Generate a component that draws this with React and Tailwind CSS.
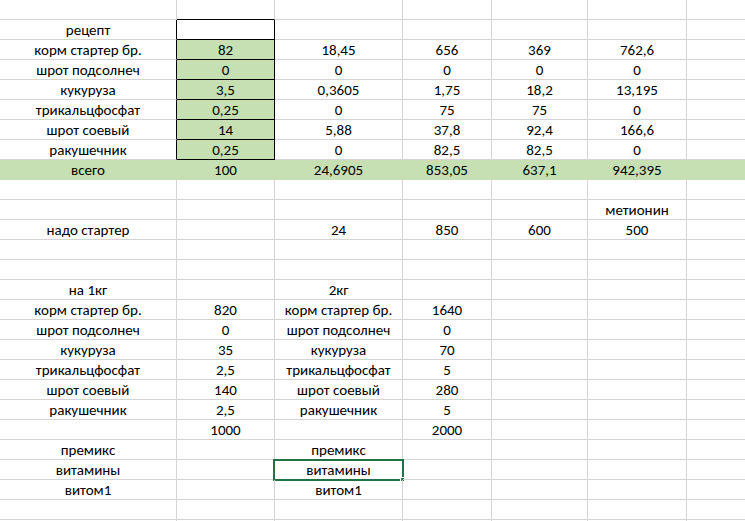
import React from "react";

const rows = [
  ["", "", "", "", "", "", ""],
  ["рецепт", "", "", "", "", "", ""],
  ["корм стартер бр.", "82", "18,45", "656", "369", "762,6", ""],
  ["шрот подсолнеч", "0", "0", "0", "0", "0", ""],
  ["кукуруза", "3,5", "0,3605", "1,75", "18,2", "13,195", ""],
  ["трикальцфосфат", "0,25", "0", "75", "75", "0", ""],
  ["шрот соевый", "14", "5,88", "37,8", "92,4", "166,6", ""],
  ["ракушечник", "0,25", "0", "82,5", "82,5", "0", ""],
  ["всего", "100", "24,6905", "853,05", "637,1", "942,395", ""],
  ["", "", "", "", "", "", ""],
  ["", "", "", "", "", "метионин", ""],
  ["надо стартер", "", "24", "850", "600", "500", ""],
  ["", "", "", "", "", "", ""],
  ["", "", "", "", "", "", ""],
  ["на 1кг", "", "2кг", "", "", "", ""],
  ["корм стартер бр.", "820", "корм стартер бр.", "1640", "", "", ""],
  ["шрот подсолнеч", "0", "шрот подсолнеч", "0", "", "", ""],
  ["кукуруза", "35", "кукуруза", "70", "", "", ""],
  ["трикальцфосфат", "2,5", "трикальцфосфат", "5", "", "", ""],
  ["шрот соевый", "140", "шрот соевый", "280", "", "", ""],
  ["ракушечник", "2,5", "ракушечник", "5", "", "", ""],
  ["", "1000", "", "2000", "", "", ""],
  ["премикс", "", "премикс", "", "", "", ""],
  ["витамины", "", "витамины", "", "", "", ""],
  ["витом1", "", "витом1", "", "", "", ""],
  ["", "", "", "", "", "", ""],
  ["", "", "", "", "", "", ""],
];

function cellClass(r, c) {
  let cls =
    "relative h-[20px] border-r border-b flex items-end justify-center pb-[1px] leading-none whitespace-nowrap ";
  if (r === 8) {
    return cls + "bg-[#c6e0b4] border-[#c6e0b4]";
  }
  let br = "border-r-[#d4d4d4]";
  let bb = "border-b-[#d4d4d4]";
  let bg = "";
  if (c === 1 && r >= 1 && r <= 7) {
    br = "border-r-black";
    bb = "border-b-black";
    if (r >= 2) bg = "bg-[#c6e0b4]";
  }
  if (c === 1 && r === 0) bb = "border-b-black";
  if (c === 0 && r >= 1 && r <= 7) br = "border-r-black";
  return cls + br + " " + bb + " " + bg;
}

export default function App() {
  return (
    <div
      className="w-[745px] h-[521px] overflow-hidden bg-white text-black text-[15px]"
      style={{ fontFamily: "Carlito, Lato, 'Liberation Sans', sans-serif" }}
    >
      <div className="grid grid-cols-[177px_98px_128px_89px_96px_99px_80px] w-[767px]">
        {rows.map((row, r) =>
          row.map((v, c) => (
            <div key={r + "-" + c} className={cellClass(r, c)}>
              <span>{v}</span>
              {r === 23 && c === 2 && (
                <div className="absolute left-[-2px] top-[-1px] right-[-2px] bottom-[-2px] border-2 border-[#217346] pointer-events-none">
                  <div className="absolute right-[-3px] bottom-[-3px] w-[5px] h-[5px] bg-[#217346] border border-white" />
                </div>
              )}
            </div>
          ))
        )}
      </div>
    </div>
  );
}
